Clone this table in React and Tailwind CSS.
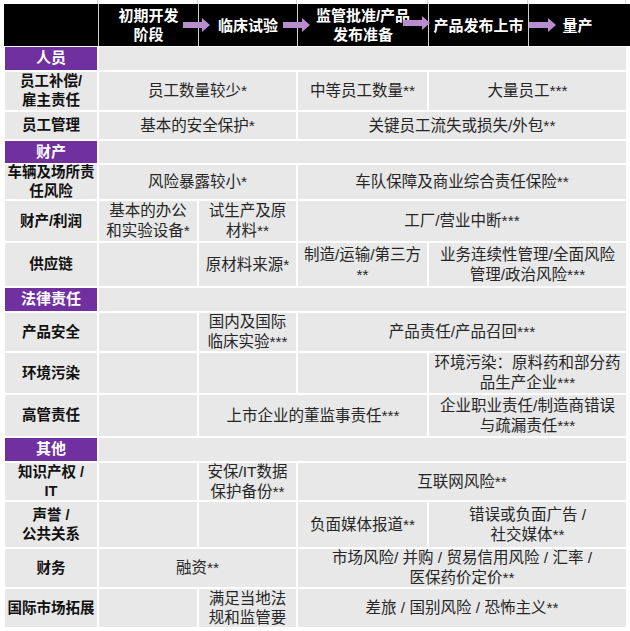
import React from 'react';

const stages = [
    { w: 'w-[94px]', lines: [] },
    { w: 'w-[100px]', lines: ['初期开发', '阶段'] },
    { w: 'w-[99px]', lines: ['临床试验'] },
    { w: 'w-[131px]', lines: ['监管批准/产品', '发布准备'] },
    { w: 'w-[100px]', lines: ['产品发布上市'] },
    { w: 'w-[98px]', lines: ['量产'] },
];

const rows = [
    { section: '人员', h: 'h-[23px]' },
    {
        label: ['员工补偿/', '雇主责任'], h: 'h-[38px]',
        cells: [
            { span: 'col-span-2', lines: ['员工数量较少*'] },
            { span: '', lines: ['中等员工数量**'] },
            { span: 'col-span-2', lines: ['大量员工***'] },
        ],
    },
    {
        label: ['员工管理'], h: 'h-[27px]',
        cells: [
            { span: 'col-span-2', lines: ['基本的安全保护*'] },
            { span: 'col-span-3', lines: ['关键员工流失或损失/外包**'] },
        ],
    },
    { section: '财产', h: 'h-[22px]' },
    {
        label: ['车辆及场所责', '任风险'], h: 'h-[34px]',
        cells: [
            { span: 'col-span-2', lines: ['风险暴露较小*'] },
            { span: 'col-span-3', lines: ['车队保障及商业综合责任保险**'] },
        ],
    },
    {
        label: ['财产/利润'], h: 'h-[40px]',
        cells: [
            { span: '', lines: ['基本的办公', '和实验设备*'] },
            { span: '', lines: ['试生产及原', '材料**'] },
            { span: 'col-span-3', lines: ['工厂/营业中断***'] },
        ],
    },
    {
        label: ['供应链'], h: 'h-[43px]',
        cells: [
            { span: '', lines: [] },
            { span: '', lines: ['原材料来源*'] },
            { span: '', lines: ['制造/运输/第三方', '**'] },
            { span: 'col-span-2', lines: ['业务连续性管理/全面风险', '管理/政治风险***'] },
        ],
    },
    { section: '法律责任', h: 'h-[23px]' },
    {
        label: ['产品安全'], h: 'h-[38px]',
        cells: [
            { span: '', lines: [] },
            { span: '', lines: ['国内及国际', '临床实验***'] },
            { span: 'col-span-3', lines: ['产品责任/产品召回***'] },
        ],
    },
    {
        label: ['环境污染'], h: 'h-[40px]',
        cells: [
            { span: '', lines: [] },
            { span: '', lines: [] },
            { span: '', lines: [] },
            { span: 'col-span-2', lines: ['环境污染：原料药和部分药', '品生产企业***'] },
        ],
    },
    {
        label: ['高管责任'], h: 'h-[41px]',
        cells: [
            { span: '', lines: [] },
            { span: 'col-span-2', lines: ['上市企业的董监事责任***'] },
            { span: 'col-span-2', lines: ['企业职业责任/制造商错误', '与疏漏责任***'] },
        ],
    },
    { section: '其他', h: 'h-[23px]' },
    {
        label: ['知识产权 /', 'IT'], h: 'h-[37px]',
        cells: [
            { span: '', lines: [] },
            { span: '', lines: ['安保/IT数据', '保护备份**'] },
            { span: 'col-span-3', lines: ['互联网风险**'] },
        ],
    },
    {
        label: ['声誉 /', '公共关系'], h: 'h-[45px]',
        cells: [
            { span: '', lines: [] },
            { span: '', lines: [] },
            { span: '', lines: ['负面媒体报道**'] },
            { span: 'col-span-2', lines: ['错误或负面广告 /', '社交媒体**'] },
        ],
    },
    {
        label: ['财务'], h: 'h-[38px]',
        cells: [
            { span: 'col-span-2', lines: ['融资**'] },
            { span: 'col-span-3', lines: ['市场风险/ 并购 / 贸易信用风险 / 汇率 /', '医保药价定价**'] },
        ],
    },
    {
        label: ['国际市场拓展'], h: 'h-[38px]',
        cells: [
            { span: '', lines: [] },
            { span: '', tight: true, lines: ['满足当地法', '规和监管要'] },
            { span: 'col-span-3', lines: ['差旅 / 国别风险 / 恐怖主义**'] },
        ],
    },
];

const Arrow = ({ pos }) => (
    <svg className={'absolute ' + pos} width="27" height="14" viewBox="0 0 27 14">
        <polygon points="0,4 19,4 19,0 27,7 19,14 19,10 0,10" fill="#b98ccf" />
    </svg>
);

const Lines = ({ lines }) => lines.map((t, i) => (
    <span key={i} className='block whitespace-nowrap'>{t}</span>
));

const App = () => {
    return (
        <div className="w-[630px] h-[631px] bg-white overflow-hidden font-['Liberation_Sans','Noto_Sans_CJK_SC',sans-serif]">
            <div className='flex ml-[4px] h-[4px]'>
                {stages.map((s, i) => (
                    <div key={i} className={s.w + ' border-r border-[#d6d6d6]'}></div>
                ))}
            </div>

            <div className='relative flex ml-[4px] h-[42px] bg-black'>
                {stages.map((s, i) => (
                    <div key={i} className={s.w + ' flex flex-col items-center justify-center text-white font-bold text-[15px] leading-[19px] text-center' + (i > 0 ? ' border-l border-[#cfcfcf]' : '')}>
                        <Lines lines={s.lines} />
                    </div>
                ))}
                <Arrow pos='left-[179px] top-[14px]' />
                <Arrow pos='left-[279px] top-[14px]' />
                <Arrow pos='left-[399px] top-[12px]' />
                <Arrow pos='left-[525px] top-[14px]' />
            </div>

            <div className='grid grid-cols-[92px_98px_97px_129px_98px_97px] gap-[2px] ml-[5px] mt-[1px]'>
                {rows.map((r, i) => r.section ? (
                    <React.Fragment key={i}>
                        <div className={r.h + ' bg-[#70309f] text-white font-bold text-[15px] flex items-center justify-center'}>
                            {r.section}
                        </div>
                        <div className={r.h + ' col-span-5 bg-[#e8e8e8]'}></div>
                    </React.Fragment>
                ) : (
                    <React.Fragment key={i}>
                        <div className={r.h + ' bg-[#e8e8e8] text-[#111] font-bold text-[14.5px] leading-[19px] flex flex-col items-center justify-center text-center'}>
                            <Lines lines={r.label} />
                        </div>
                        {r.cells.map((c, j) => (
                            <div key={j} className={r.h + ' ' + c.span + ' bg-[#e8e8e8] text-[#262626] text-[15.5px] flex flex-col items-center justify-center text-center overflow-hidden ' + (c.tight ? 'leading-[19px]' : 'leading-[20px]')}>
                                <Lines lines={c.lines} />
                            </div>
                        ))}
                    </React.Fragment>
                ))}
            </div>
        </div>
    );
};

export default App;
